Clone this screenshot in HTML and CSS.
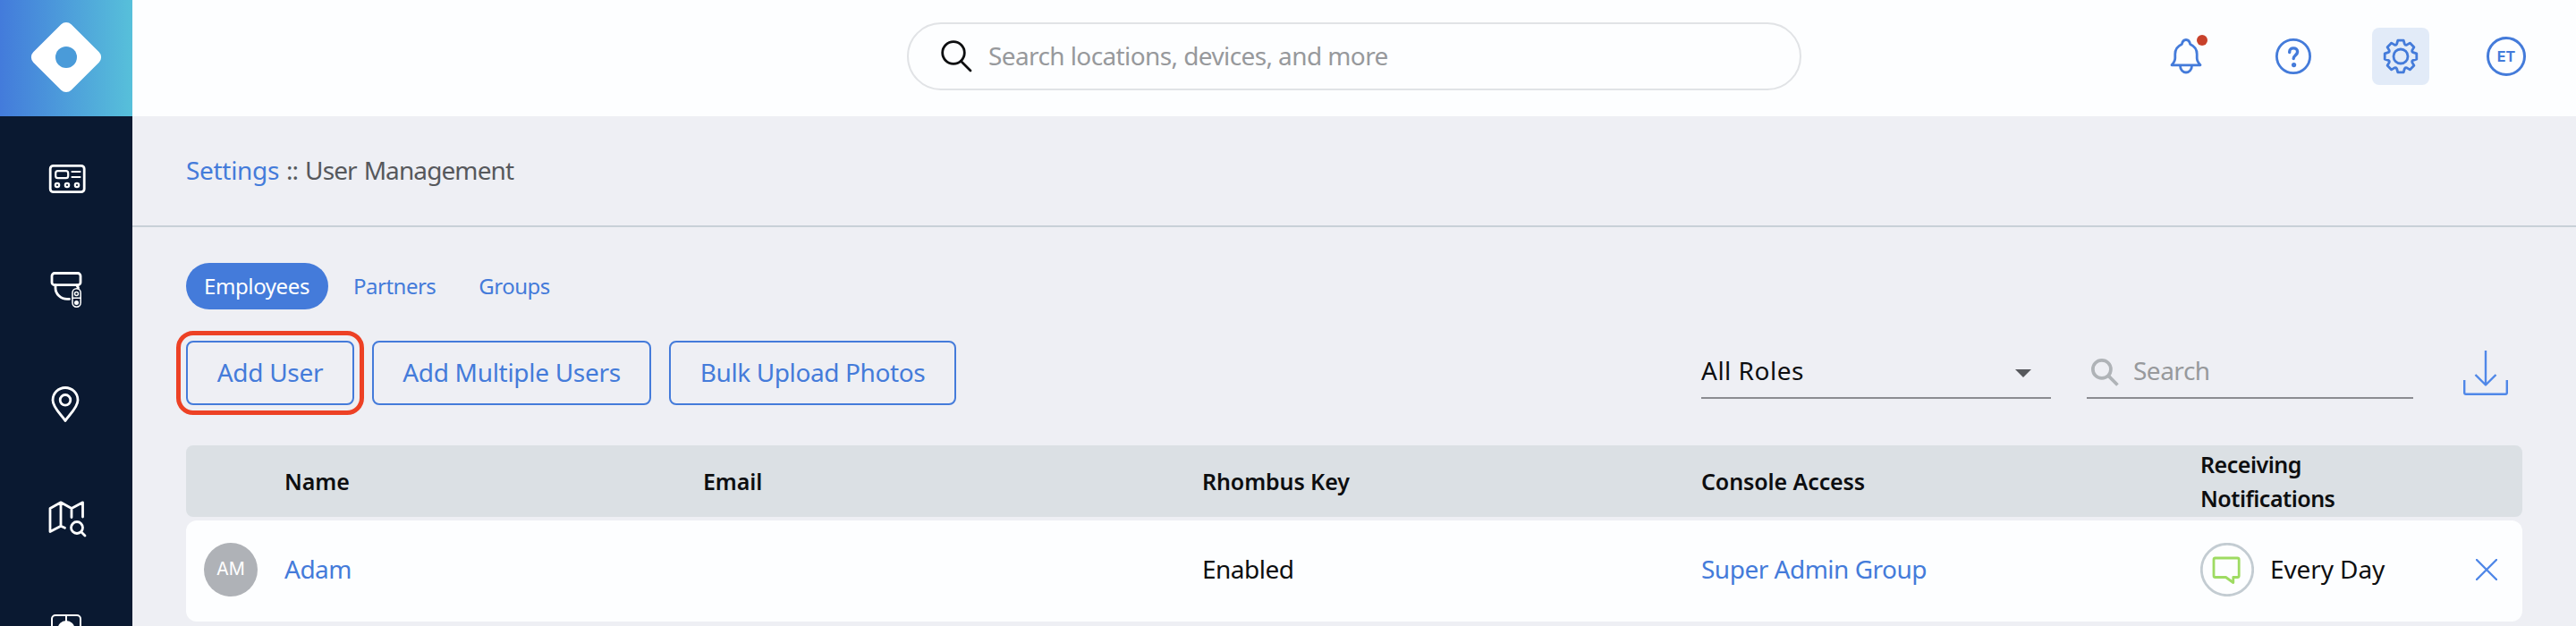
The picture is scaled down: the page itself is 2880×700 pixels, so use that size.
FILE: index.html
```html
<!DOCTYPE html>
<html lang="en">
    <head>
        <meta charset="UTF-8">
        <meta name="viewport" content="width=device-width, initial-scale=1.0">
        <title>User Management</title>
        <link rel="stylesheet" href="styles.css">
    </head>
    <body>
        <div class="sidebar">
            <a class="logo">
                <svg width="148" height="130" viewBox="0 0 148 130">
                    <rect x="44" y="34" width="60" height="60" rx="8" fill="#fff" transform="rotate(45 74 64)"/>
                    <circle cx="74" cy="64" r="12" fill="#4a9bd9"/>
                </svg>
            </a>
            <nav class="menu">
                <svg viewBox="0 0 64 64">
                    <rect x="14.2" y="17.3" width="38" height="29.4" rx="3.5"/>
                    <g stroke-width="2.2">
                        <rect x="20.2" y="23.2" width="14" height="8" rx="2.5"/>
                        <path d="M38.5 24h9M38.5 30h9"/>
                        <circle cx="22" cy="39" r="2.2"/>
                        <circle cx="33" cy="39" r="2.2"/>
                        <circle cx="44" cy="39" r="2.2"/>
                    </g>
                </svg>
                <svg viewBox="0 0 64 64">
                    <rect x="16" y="9.5" width="32" height="13.2" rx="3"/>
                    <path d="M20 23v3c0 7 6 12.4 13 12.4h2.5M44 23l1.5 3"/>
                    <g stroke-width="1.5">
                        <rect x="39" y="26.8" width="9.2" height="20.4" rx="4.6"/>
                        <path d="M39 37.2h9"/>
                        <circle cx="43.5" cy="32.5" r="2"/>
                    </g>
                    <circle class="filled" cx="43.5" cy="42.4" r="2.5"/>
                </svg>
                <svg viewBox="0 0 64 64">
                    <path d="M31 46.5C27 40 17 32 17 23.5a14 14 0 0 1 28 0C45 32 35 40 31 46.5z"/>
                    <circle cx="31" cy="23.3" r="5.8"/>
                </svg>
                <svg viewBox="0 0 64 64">
                    <path d="M50.5 26V9.8L38 16.5 26 9.8 14 16.5v26L26 36.3l4.5 2M26 9.8v26.5M38 16.5v10"/>
                    <circle cx="44" cy="38" r="6.5"/>
                    <path d="M49 43l4 4"/>
                </svg>
                <svg viewBox="0 0 64 64">
                    <rect x="16" y="8" width="32" height="34" rx="4" stroke-width="2"/>
                    <path d="M32 8v8" stroke-width="2"/>
                    <circle class="filled" cx="32" cy="23.5" r="9.5"/>
                </svg>
            </nav>
        </div>

        <div class="content">
            <header class="topbar">
                <label class="search">
                    <svg width="36" height="36" viewBox="0 0 36 36">
                        <circle cx="14" cy="14" r="12.3"/>
                        <path d="M22.5 23.5L33 34"/>
                    </svg>
                    <input type="text" placeholder="Search locations, devices, and more">
                </label>
                <div class="actions">
                    <a class="action">
                        <svg viewBox="0 0 64 64">
                            <path d="M16 41.8C18.5 39 19.8 37 19.8 34V29.5C19.8 24 22.8 20.5 27.3 18.5 28 15 29.2 13.5 32 13.5S36 15 36.7 18.5C41.2 20.5 44.2 24 44.2 29.5V34C44.2 37 45.5 39 48 41.8Z"/>
                            <path d="M25.5 42.5a6.5 7.5 0 0 0 13 0"/>
                        </svg>
                        <span class="dot"></span>
                    </a>
                    <a class="action">
                        <svg viewBox="0 0 64 64">
                            <circle cx="32" cy="32" r="18.6"/>
                            <path stroke-width="3.4" d="M27.7 27.5v-.5c0-5.5 8.9-5.5 8.9 0 0 3.5-4.4 4-4.4 7.5"/>
                            <circle class="mark" cx="32.6" cy="41.6" r="2.6"/>
                        </svg>
                    </a>
                    <a class="action active">
                        <svg viewBox="-32 -32 64 64">
                            <path d="M-3.2-17.8H3.2L4.3-14Q5-12.2 6.9-12.9L10.3-14.9 14.9-10.3 12.9-6.9Q12.2-5 14-4.3L17.8-3.2V3.2L14 4.3Q12.2 5 12.9 6.9L14.9 10.3 10.3 14.9 6.9 12.9Q5 12.2 4.3 14L3.2 17.8H-3.2L-4.3 14Q-5 12.2-6.9 12.9L-10.3 14.9-14.9 10.3-12.9 6.9Q-12.2 5-14 4.3L-17.8 3.2V-3.2L-14-4.3Q-12.2-5-12.9-6.9L-14.9-10.3-10.3-14.9-6.9-12.9Q-5-12.2-4.3-14Z"/>
                            <circle r="8"/>
                        </svg>
                    </a>
                    <a class="account">ET</a>
                </div>
            </header>

            <div class="breadcrumb"><a>Settings</a> :: User Management</div>

            <main>
                <div class="tabs">
                    <a class="tab selected">Employees</a>
                    <a class="tab">Partners</a>
                    <a class="tab">Groups</a>
                </div>

                <div class="toolbar">
                    <div class="buttons">
                        <button type="button" class="add-user">Add User</button>
                        <button type="button" class="add-multiple">Add Multiple Users</button>
                        <button type="button" class="bulk-upload">Bulk Upload Photos</button>
                    </div>
                    <div class="filters">
                        <div class="select">
                            <span>All Roles</span>
                            <i class="arrow"></i>
                        </div>
                        <label class="filter">
                            <svg width="31" height="31" viewBox="0 0 30 30">
                                <circle cx="11.5" cy="11.5" r="9.7"/>
                                <path d="M19 19l9.5 9.5"/>
                            </svg>
                            <input type="text" placeholder="Search">
                        </label>
                        <svg class="download" width="50" height="50" viewBox="0 0 50 50">
                            <path d="M25 0v38M13.5 27L25 38.5 36.5 27M1.2 33v14q0 1.8 1.8 1.8h44q1.8 0 1.8-1.8V33"/>
                        </svg>
                    </div>
                </div>

                <div class="table">
                    <div class="row head">
                        <span></span>
                        <span>Name</span>
                        <span>Email</span>
                        <span>Rhombus Key</span>
                        <span>Console Access</span>
                        <span class="narrow">Receiving<br>Notifications</span>
                        <span></span>
                    </div>
                    <div class="row">
                        <span class="avatar">AM</span>
                        <a>Adam</a>
                        <span></span>
                        <span>Enabled</span>
                        <a>Super Admin Group</a>
                        <div class="notify">
                            <svg width="60" height="60" viewBox="0 0 60 60">
                                <circle cx="30" cy="30" r="28.7" stroke="#c3ccd2"/>
                                <path stroke="#9edb62" d="M16.5 17h25q1.7 0 1.7 1.7v18q0 1.8-1.7 1.8h-4.7v6l-8.3-6H16.8q-1.8 0-1.8-1.8v-18q0-1.7 1.8-1.7z"/>
                            </svg>
                            <span>Every Day</span>
                        </div>
                        <svg class="remove" width="24" height="24" viewBox="0 0 24 24">
                            <path d="M1 1l22 22M23 1L1 23"/>
                        </svg>
                    </div>
                </div>
            </main>
        </div>
    </body>
</html>
```
FILE: styles.css
```css
* {
    margin: 0;
    padding: 0;
    box-sizing: border-box;
}

body {
    display: flex;
    height: 700px;
    overflow: hidden;
    background-color: #eeeff4;
    font-family: "Noto Sans", "Open Sans", sans-serif;
    font-size: 28px;
    letter-spacing: -0.5px;
    color: #0d0e10;
}

a {
    color: #447bda;
    text-decoration: none;
}

svg {
    display: block;
    fill: none;
    stroke-linecap: round;
    stroke-linejoin: round;
}

input {
    width: 100%;
    border: none;
    outline: none;
    background: none;
    font: inherit;
    letter-spacing: inherit;
}

input::placeholder {
    color: #97999c;
}

.sidebar {
    width: 148px;
    height: 700px;
    flex-shrink: 0;
    overflow: hidden;
    background-color: #0a1931;
}

.logo {
    display: block;
    height: 130px;
    background: linear-gradient(to right, #437bdb, #57c0da);
}

.menu {
    padding-top: 6px;
    display: flex;
    flex-direction: column;
    align-items: center;

    svg {
        width: 64px;
        height: 64px;
        margin: 32px 0;
        flex-shrink: 0;
        stroke: white;
        stroke-width: 2.8;
    }

    .filled {
        fill: white;
        stroke: none;
    }
}

.content {
    flex: 1;
}

.topbar {
    height: 130px;
    padding: 25px 46px 0 866px;
    display: flex;
    justify-content: space-between;
    background-color: #fdfeff;
}

.search {
    width: 1000px;
    height: 76px;
    padding: 0 36px 2px;
    display: flex;
    align-items: center;
    gap: 17px;
    border: 2px solid #e1e3e6;
    border-radius: 38px;
    letter-spacing: -0.6px;

    svg {
        flex-shrink: 0;
        margin-top: 2px;
        stroke: #0d0e10;
        stroke-width: 2.8;
    }
}

.actions {
    height: 64px;
    margin-top: 6px;
    display: flex;
    gap: 56px;
}

.action {
    position: relative;
    width: 64px;
    height: 64px;
    border-radius: 8px;

    svg {
        width: 64px;
        height: 64px;
        stroke: #447bda;
        stroke-width: 2.8;
    }

    .mark {
        fill: #447bda;
        stroke: none;
    }
}

.active {
    background-color: #e2ebf8;
}

.dot {
    position: absolute;
    top: 8px;
    right: 8px;
    width: 12px;
    height: 12px;
    border-radius: 50%;
    background-color: #c8412b;
}

.account {
    width: 44px;
    height: 44px;
    margin: 10px 10px 0 8px;
    display: flex;
    align-items: center;
    justify-content: center;
    border: 3px solid #447bda;
    border-radius: 50%;
    font-family: Inter, sans-serif;
    font-size: 16px;
    font-weight: 700;
    letter-spacing: 0;
}

.breadcrumb {
    height: 124px;
    padding: 0 60px 2px;
    display: flex;
    align-items: center;
    border-bottom: 2px solid #c8d0d7;
    white-space: pre;
    word-spacing: 1.5px;
    letter-spacing: -0.9px;
    color: #56585c;

    a {
        letter-spacing: -0.3px;
    }
}

main {
    padding: 40px 60px 0;
}

.tabs {
    display: flex;
    gap: 8px;
    font-size: 24px;
    letter-spacing: -0.5px;
}

.tab {
    height: 52px;
    padding: 0 20px;
    line-height: 51px;
    border-radius: 26px;
}

.selected {
    width: 159px;
    letter-spacing: -0.4px;
    background-color: #447bda;
    color: white;
}

.toolbar {
    margin-top: 35px;
    display: flex;
    justify-content: space-between;
    align-items: flex-start;
}

.buttons {
    display: flex;
    gap: 20px;
}

button {
    height: 72px;
    padding-bottom: 3px;
    border: 2px solid #447bda;
    border-radius: 8px;
    background: none;
    font: inherit;
    letter-spacing: -0.3px;
    color: #447bda;
    cursor: pointer;
}

.add-user {
    width: 188px;
    outline: 5px solid #ed4125;
    outline-offset: 6px;
}

.add-multiple {
    width: 312px;
}

.bulk-upload {
    width: 321px;
    letter-spacing: -0.4px;
}

.filters {
    display: flex;
    align-items: flex-start;
}

.select {
    width: 391px;
    height: 65px;
    padding: 3px 22px 0 0;
    display: flex;
    align-items: center;
    justify-content: space-between;
    border-bottom: 2px solid #8b8c91;
    letter-spacing: 0.5px;
}

.arrow {
    border: 9px solid transparent;
    border-top-color: #56585c;
    border-bottom: none;
    margin-top: 7px;
}

.filter {
    width: 365px;
    height: 65px;
    margin-left: 40px;
    padding: 3px 0 0 5px;
    display: flex;
    align-items: center;
    gap: 16px;
    border-bottom: 2px solid #8b8c91;

    svg {
        flex-shrink: 0;
        margin-top: 5px;
        stroke: #afb3b7;
        stroke-width: 3.6;
        stroke-linecap: butt;
    }
}

.download {
    margin: 11px 16px 0 56px;
    stroke: #4f87e8;
    stroke-width: 2.4;
    stroke-linecap: butt;
}

.table {
    margin-top: 45px;
}

.row {
    display: grid;
    grid-template-columns: 90px 468px 558px 558px 558px 308px 24px;
    align-items: center;
    height: 113px;
    padding: 0 0 3px 20px;
    border-radius: 12px;
    background-color: #fdfeff;
}

.head {
    height: 80px;
    margin-bottom: 4px;
    padding-bottom: 1px;
    border-radius: 8px;
    background-color: #dbe0e4;
    font-size: 25px;
    font-weight: 600;
    line-height: 38px;
    letter-spacing: -0.1px;
}

.narrow {
    letter-spacing: -0.5px;
}

.avatar {
    width: 60px;
    height: 60px;
    border-radius: 50%;
    background-color: #afb2b7;
    color: white;
    font-family: Inter, sans-serif;
    font-size: 20px;
    font-weight: 400;
    line-height: 59px;
    text-align: center;
    letter-spacing: 0;
}

.notify {
    display: flex;
    align-items: center;
    gap: 18px;
    letter-spacing: -0.1px;

    svg {
        stroke-width: 2.8;
    }

    span {
        margin-top: -2px;
    }
}

.row:not(.head) > span:not(.avatar),
.row > a {
    margin-top: -2px;
}

.remove {
    stroke: #4f87e8;
    stroke-width: 2.4;
}
```
